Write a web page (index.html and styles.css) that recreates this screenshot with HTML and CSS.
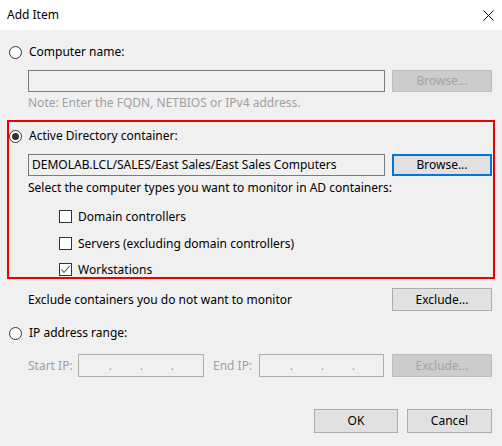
FILE: index.html
```html
<!DOCTYPE html>
<html lang="en">
<head>
<meta charset="utf-8">
<title>Add Item</title>
<link rel="stylesheet" href="styles.css">
</head>
<body>
<div class="dialog">
  <div class="titlebar">
    <span class="title">Add Item</span>
    <svg class="close" width="11" height="11" viewBox="0 0 11 11"><path d="M0.5 0.5 L10.5 10.5 M10.5 0.5 L0.5 10.5" stroke="#000" stroke-width="1" fill="none"/></svg>
  </div>
  <div class="content">
    <div class="radio-row r-computer"><span class="radio"></span><span class="radio-label">Computer name:</span></div>
    <div class="field-row r-compfield">
      <div class="textbox disabled"></div>
      <div class="btn btn-disabled">Browse...</div>
    </div>
    <div class="note">Note: Enter the FQDN, NETBIOS or IPv4 address.</div>

    <div class="highlight">
      <div class="radio-row r-ad"><span class="radio checked"></span><span class="radio-label">Active Directory container:</span></div>
      <div class="field-row r-adfield">
        <div class="textbox">DEMOLAB.LCL/SALES/East Sales/East Sales Computers</div>
        <div class="btn btn-focused">Browse...</div>
      </div>
      <div class="hint">Select the computer types you want to monitor in AD containers:</div>
      <div class="check-row c1"><span class="checkbox"></span><span>Domain controllers</span></div>
      <div class="check-row c2"><span class="checkbox"></span><span>Servers (excluding domain controllers)</span></div>
      <div class="check-row c3"><span class="checkbox checked"><svg width="11" height="11" viewBox="0 0 11 11"><path d="M1.5 5.5 L4 8.5 L9.5 2" stroke="#555" stroke-width="1.1" fill="none"/></svg></span><span>Workstations</span></div>
    </div>

    <div class="exclude-row">
      <span class="exclude-text">Exclude containers you do not want to monitor</span>
      <div class="btn">Exclude...</div>
    </div>

    <div class="radio-row r-ip"><span class="radio"></span><span class="radio-label">IP address range:</span></div>
    <div class="ip-row">
      <span class="ip-label start">Start IP:</span>
      <div class="ipbox start-box"><span>.</span><span>.</span><span>.</span></div>
      <span class="ip-label end">End IP:</span>
      <div class="ipbox end-box"><span>.</span><span>.</span><span>.</span></div>
      <div class="btn btn-disabled">Exclude...</div>
    </div>

    <div class="footer">
      <div class="btn ok">OK</div>
      <div class="btn cancel">Cancel</div>
    </div>
  </div>
</div>
</body>
</html>
```

FILE: styles.css
```css
* { box-sizing: border-box; }
html, body { margin: 0; padding: 0; }
body {
  width: 502px;
  height: 446px;
  background: #f0f0f0;
  font-family: "Noto Sans", "Open Sans", sans-serif;
  font-size: 12px;
  color: #000;
  overflow: hidden;
}
.dialog { width: 502px; height: 446px; background: #f0f0f0; }
.titlebar {
  height: 30px;
  background: #fff;
  display: flex;
  align-items: center;
  justify-content: space-between;
  padding: 0 7px 0 7px;
}
.title { font-size: 12px; line-height: 16px; margin-top: -1px; }
.close { margin-right: 1px; margin-top: 0; }

.content { padding: 0 10px 0 9px; }

.radio-row { display: flex; align-items: center; height: 16px; }
.radio {
  width: 13px; height: 13px;
  border: 1px solid #333;
  border-radius: 50%;
  background: #fff;
  position: relative;
  flex: none;
}
.radio.checked::after {
  content: "";
  position: absolute;
  left: 2px; top: 2px;
  width: 7px; height: 7px;
  border-radius: 50%;
  background: #333;
}
.radio-label { margin-left: 7px; line-height: 16px; }
.r-computer { margin-top: 14px; }

.field-row { display: flex; margin-left: 19px; height: 22px; }
.r-compfield { margin-top: 10px; }
.textbox {
  width: 357px; height: 22px;
  border: 1px solid #7a7a7a;
  background: #f0f0f0;
  padding: 0 3px;
  line-height: 20px;
  white-space: nowrap;
  overflow: hidden;
}
.btn {
  width: 100px; height: 22px;
  margin-left: 7px;
  background: #e1e1e1;
  border: 1px solid #adadad;
  display: flex; align-items: center; justify-content: center;
  line-height: 16px;
}
.btn-disabled { background: #cccccc; border-color: #bfbfbf; color: #a3a3a3; }
.btn-focused { border: 2px solid #0078d7; }

.note { margin-left: 19px; margin-top: 3px; line-height: 16px; color: #a0a0a0; }

.highlight {
  margin-left: -2px;
  margin-top: 9px;
  width: 488px;
  height: 159px;
  border: 2px solid #ee0000;
}
.r-ad { margin-top: 6px; }
.r-adfield { margin-top: 10px; }
.hint { margin-left: 19px; margin-top: 4px; line-height: 16px; }
.check-row { display: flex; align-items: center; height: 16px; margin-left: 50px; }
.check-row.c1 { margin-top: 12px; }
.check-row.c2 { margin-top: 11px; }
.check-row.c3 { margin-top: 10px; }
.checkbox {
  width: 13px; height: 13px;
  border: 1px solid #333;
  background: #fff;
  margin-right: 6px;
  flex: none;
  display: flex; align-items: center; justify-content: center;
}
.checkbox svg { display: block; }

.exclude-row { display: flex; align-items: center; margin-left: 19px; margin-top: 9px; height: 23px; }
.exclude-text { width: 357px; line-height: 16px; }
.exclude-row .btn { height: 23px; }

.r-ip { margin-top: 14px; }
.ip-row { display: flex; align-items: center; margin-left: 19px; margin-top: 13px; height: 23px; color: #a0a0a0; }
.ip-label { line-height: 16px; }
.ip-label.start { width: 50px; }
.ip-label.end { width: 46px; margin-left: 9px; }
.ipbox {
  height: 23px;
  border: 1px solid #adadad;
  background: #f0f0f0;
  display: flex; align-items: center;
  color: #a0a0a0;
}
.start-box { width: 126px; }
.end-box { width: 125px; }
.ipbox span { width: 31px; text-align: right; line-height: 16px; }
.ipbox span:first-child { width: 33px; }
.ip-row .btn { height: 23px; margin-left: 8px; }

.footer { display: flex; justify-content: flex-end; margin-top: 32px; }
.footer .btn { height: 24px; margin-left: 9px; }
.footer .ok { width: 84px; }
.footer .cancel { width: 85px; }
```
